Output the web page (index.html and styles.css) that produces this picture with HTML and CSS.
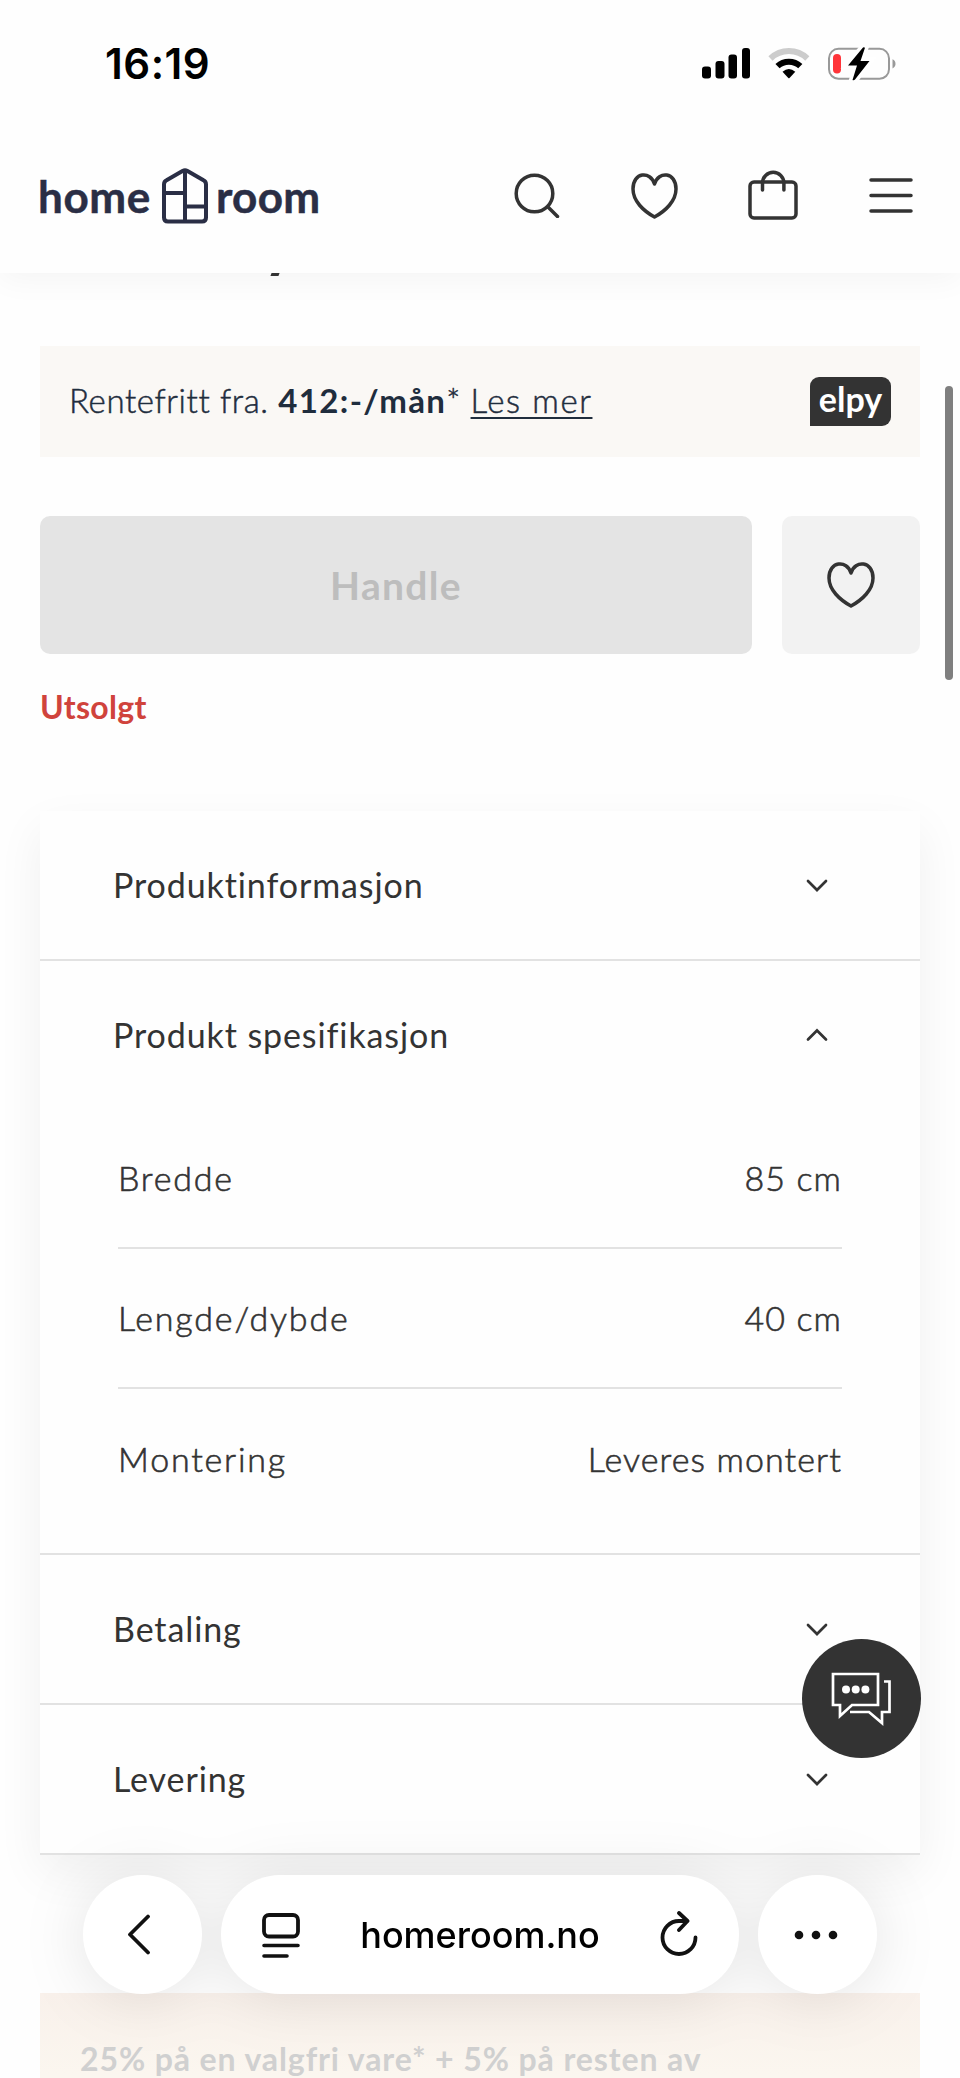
FILE: index.html
```
<!DOCTYPE html>
<html lang="no">
<head>
    <meta charset="UTF-8">
    <meta name="viewport" content="width=device-width, initial-scale=1.0">
    <title>Homeroom</title>
    <link rel="stylesheet" href="styles.css">
</head>
<body>
<div class="screen">

    <header class="top">
        <div class="status">
            <span class="clock">16:19</span>
            <svg class="status-icons" width="194" height="34" viewBox="0 0 194 34">
                <rect x="0" y="19.500" width="9" height="12" rx="3"/>
                <rect x="13.500" y="14" width="9" height="17.500" rx="3"/>
                <rect x="26.500" y="7.500" width="8.500" height="24" rx="3"/>
                <rect x="40" y="1" width="8" height="30.500" rx="3"/>
                <g fill="none" stroke="#000" stroke-width="6">
                    <path d="M68.500 11.500a26.500 26.500 0 0 1 36.800 0" stroke="#ccc"/>
                    <path d="M75.500 19.200a16.500 16.500 0 0 1 22.800 0"/>
                </g>
                <path d="M80.500 24.800q6.400-5.600 12.800 0L87.500 31q-.6.500-1.200 0z"/>
                <rect x="127" y="1.800" width="60" height="30" rx="9.500" fill="none" stroke="#999" stroke-width="2"/>
                <path d="M190.500 12.200q3 1.200 3 4.600t-3 4.600z" fill="#999"/>
                <rect x="131" y="7" width="8" height="19.500" rx="4" fill="#ff3439"/>
                <path d="M161 0.500L146 18.500h9l-4.500 14.500q1.500.6 2.500-.5L167.500 14h-9L163 .8q-1-.8-2-.3z" stroke="#fff" stroke-width="7"/>
                <path d="M161 0.500L146 18.500h9l-4.500 14.500q1.500.6 2.500-.5L167.500 14h-9L163 .8q-1-.8-2-.3z"/>
            </svg>
        </div>
        <div class="nav">
            <div class="logo">
                <span class="word home">home</span>
                <svg width="46" height="56" viewBox="0 0 46 56" fill="none" stroke="#2a2e45" stroke-width="4" stroke-linejoin="round">
                    <path d="M2 16.500q0-3 2.500-4.200L20.500 3q2.500-1.300 5 0l16 9.300q2.500 1.200 2.500 4.200v33q0 4-4 4H6q-4 0-4-4z"/>
                    <path d="M23 3v50M2 25h21M23 38.500h21"/>
                </svg>
                <span class="word room">room</span>
            </div>
            <div class="nav-icons">
                <svg width="46" height="46" viewBox="0 0 46 46">
                    <circle cx="20.500" cy="21.500" r="18.300"/>
                    <path d="M34 35l9.500 9.500"/>
                </svg>
                <svg width="48" height="48" viewBox="0 0 48 48">
                    <path d="M24.500 13C20.500-.5 3 1 3 18c0 12 10.500 22 21.500 28C35.500 40 46 30 46 18 46 1 28.500-.5 24.500 13z"/>
                </svg>
                <svg width="50" height="50" viewBox="0 0 50 50">
                    <rect x="2" y="12" width="46" height="36" rx="4"/>
                    <path d="M14.500 20v-7a10.700 10.700 0 0 1 21.400 0v7"/>
                </svg>
                <svg width="46" height="46" viewBox="0 0 46 46">
                    <path d="M3 8h40M3 23.500h40M3 39h40"/>
                </svg>
            </div>
        </div>
    </header>

    <main class="content">
        <div class="price-edge"></div>

        <div class="notice">
            <p>Rentefritt fra. <b>412:-/mån</b>* <a href="#">Les mer</a></p>
            <span class="elpy">elpy</span>
        </div>

        <div class="buy">
            <button class="handle" disabled>Handle</button>
            <button class="fav">
                <svg width="48" height="48" viewBox="0 0 48 48">
                    <path d="M24 13C20-.5 2 1 2 18c0 12 11 22 22 28 11-6 22-16 22-28C46 1 28-.5 24 13z"/>
                </svg>
            </button>
        </div>
        <p class="stock">Utsolgt</p>

        <div class="accordion">
            <section class="item">
                <h3>Produktinformasjon <svg width="22" height="14" viewBox="0 0 22 14"><path d="M2 3l9 9 9-9"/></svg></h3>
            </section>
            <section class="item">
                <h3>Produkt spesifikasjon <svg width="22" height="14" viewBox="0 0 22 14"><path d="M2 11.500l9-9 9 9"/></svg></h3>
                <dl class="specs">
                    <div><dt>Bredde</dt><dd>85 cm</dd></div>
                    <div><dt>Lengde/dybde</dt><dd>40 cm</dd></div>
                    <div><dt>Montering</dt><dd>Leveres montert</dd></div>
                </dl>
            </section>
            <section class="item">
                <h3>Betaling <svg width="22" height="14" viewBox="0 0 22 14"><path d="M2 3l9 9 9-9"/></svg></h3>
            </section>
            <section class="item">
                <h3>Levering <svg width="22" height="14" viewBox="0 0 22 14"><path d="M2 3l9 9 9-9"/></svg></h3>
            </section>
        </div>

        <div class="promo"><p>25% på en valgfri vare* + 5% på resten av</p></div>
    </main>

    <div class="scrollbar"></div>

    <button class="chat">
        <svg width="60" height="54" viewBox="0 0 60 54">
            <path d="M2 2h45v31H21L9 44V33H2z"/>
            <path d="M53 9.500h5.500V40H51v11L38 40H19"/>
            <g class="dots"><circle cx="15" cy="17.500" r="4"/><circle cx="24.700" cy="17.500" r="4"/><circle cx="34.400" cy="17.500" r="4"/></g>
        </svg>
    </button>

    <!-- browser toolbar -->
    <div class="toolbar">
        <div class="round">
            <svg class="back" width="24" height="42" viewBox="0 0 24 42"><path d="M21 2.500L3 20.500l18 18"/></svg>
        </div>
        <div class="address">
            <svg width="40" height="48" viewBox="0 0 40 48">
                <rect x="3" y="4" width="34" height="21.500" rx="5"/>
                <path d="M3 34.500h34M3 45h23" stroke-width="3.600"/>
            </svg>
            <span>homeroom.no</span>
            <svg width="40" height="48" viewBox="0 0 40 48">
                <path d="M28.500 10H20A16.500 16.500 0 1 0 36.500 26.500M20 2l8.500 8-8.500 9"/>
            </svg>
        </div>
        <div class="round">
            <svg class="more" width="44" height="10" viewBox="0 0 44 10"><circle cx="5" cy="5" r="4.300"/><circle cx="22" cy="5" r="4.300"/><circle cx="39" cy="5" r="4.300"/></svg>
        </div>
    </div>

</div>
</body>
</html>
```
FILE: styles.css
```
* {
    box-sizing: border-box;
}
body {
    margin: 0;
    background: #fefefe;
    color: #333;
    font-family: Lato, "Liberation Sans", sans-serif;
}
p, h3, dl, dd {
    margin: 0;
}
button {
    border: 0;
    padding: 0;
    font-family: inherit;
}
svg {
    flex: none;
}
.screen {
    position: relative;
    width: 960px;
    height: 2078px;
    overflow: hidden;
}

/* header */
.top {
    position: relative;
    height: 273px;
    background: #fefefe;
    box-shadow: 0 6px 30px rgba(0, 0, 0, 0.045);
}
.status {
    display: flex;
    justify-content: space-between;
    align-items: center;
    height: 127px;
    padding: 0 64px 0 105px;
}
.clock {
    font: 600 42px Inter, sans-serif;
    letter-spacing: 0.5px;
    color: #000;
}
.nav {
    display: flex;
    justify-content: space-between;
    align-items: center;
    height: 137px;
    padding: 0 46px 0 38px;
}
.logo {
    display: flex;
    align-items: center;
    color: #2a2e45;
}
.word {
    font-size: 44px;
    font-weight: 700;
    letter-spacing: 0.6px;
    line-height: 52px;
    -webkit-text-stroke: 0.5px;
}
/* short stem on the h */
.home {
    width: 124px;
    clip-path: inset(9px 0 0 0);
}
.room {
    margin-left: 8px;
    letter-spacing: 0.3px;
}
.nav-icons {
    display: flex;
    align-items: center;
    gap: 70px;
    padding-bottom: 2px;
}
.nav-icons svg, .fav svg {
    fill: none;
    stroke: #333;
    stroke-width: 3.5;
    stroke-linecap: round;
    stroke-linejoin: round;
}

/* product */
.content {
    padding: 0 40px;
}
.price-edge {
    width: 8px;
    height: 3px;
    margin-left: 231px;
    background: #333;
    transform: skewX(-20deg);
}
.notice {
    display: flex;
    justify-content: space-between;
    align-items: center;
    height: 111px;
    margin-top: 70px;
    padding: 0 29px;
    background: #faf8f5;
    color: #1f2d3d;
    font-size: 33px;
    font-weight: 300;
}
.notice p {
    padding-bottom: 4px;
    letter-spacing: 0.6px;
    -webkit-text-stroke: 0.5px;
}
.notice b {
    font-weight: 700;
    letter-spacing: 1.4px;
    -webkit-text-stroke: 0;
}
.notice a {
    color: inherit;
    letter-spacing: 1.6px;
    text-decoration-thickness: 2px;
    text-underline-offset: 4px;
}
.elpy {
    width: 81px;
    height: 49px;
    border-radius: 9px 9px 9px 0;
    background: #333;
    color: #fff;
    font-size: 34px;
    font-weight: 700;
    line-height: 43px;
    text-align: center;
}
.buy {
    display: flex;
    gap: 30px;
    height: 138px;
    margin-top: 59px;
}
.handle {
    flex: 1;
    border-radius: 10px;
    background: #e4e4e4;
    color: #bdbdbd;
    font-size: 39px;
    font-weight: 700;
    letter-spacing: 1.3px;
}
.fav {
    width: 138px;
    border-radius: 10px;
    background: #f2f2f2;
}
.stock {
    margin-top: 33px;
    height: 124px;
    color: #d0433c;
    font-size: 32px;
    font-weight: 700;
    letter-spacing: 0.3px;
    line-height: 40px;
}

/* accordion */
.accordion {
    background: #fefefe;
    box-shadow: 0 18px 45px rgba(0, 0, 0, 0.06);
}
.item {
    border-bottom: 2px solid #e2e2e2;
}
.item h3 {
    display: flex;
    justify-content: space-between;
    align-items: center;
    height: 148px;
    padding: 0 92px 1px 73px;
    font-size: 34px;
    font-weight: 400;
    letter-spacing: 0.9px;
}
.item h3 svg {
    fill: none;
    stroke: #333;
    stroke-width: 2.7;
    stroke-linecap: round;
}
.specs {
    padding: 0 78px 24px;
    font-size: 34px;
    font-weight: 300;
    -webkit-text-stroke: 0.6px;
}
.specs div {
    display: flex;
    justify-content: space-between;
    align-items: center;
    height: 140px;
    padding-bottom: 2px;
    border-bottom: 2px solid #e2e2e2;
}
.specs div:last-child {
    border: 0;
}
.specs dt {
    letter-spacing: 1.8px;
}
.specs dd {
    letter-spacing: 1.1px;
}
.promo {
    height: 100px;
    margin-top: 138px;
    padding: 46px 40px 0;
    background: linear-gradient(#f9f1eb, #fbf6ef 80px);
    color: #d0d0d0;
    font-size: 32px;
    font-weight: 700;
    letter-spacing: 0.9px;
    line-height: 40px;
    white-space: nowrap;
}

/* things on top of the page */
.scrollbar {
    position: absolute;
    top: 386px;
    right: 7px;
    width: 8px;
    height: 294px;
    border-radius: 4px;
    background: #7f7f7f;
}
.chat {
    position: absolute;
    top: 1639px;
    right: 39px;
    width: 119px;
    height: 119px;
    padding: 4px 2px 0 0;
    border-radius: 50%;
    background: #333;
}
.chat svg {
    fill: none;
    stroke: #fff;
    stroke-width: 2.7;
}
.chat .dots {
    fill: #fff;
    stroke: none;
}
/* one soft shadow for the three buttons together */
.toolbar {
    position: absolute;
    left: 83px;
    right: 83px;
    bottom: 84px;
    display: flex;
    gap: 19px;
    height: 119px;
    filter: drop-shadow(0 4px 30px rgba(0, 0, 0, 0.1));
}
.round, .address {
    display: flex;
    align-items: center;
    border-radius: 60px;
    background: #fff;
}
.round {
    width: 119px;
    justify-content: center;
}
.address {
    flex: 1;
    justify-content: space-between;
    padding: 0 40px;
    color: #000;
    font: 500 36px Inter, sans-serif;
}
.toolbar svg {
    fill: none;
    stroke: #111;
    stroke-width: 3.8;
    stroke-linecap: round;
    stroke-linejoin: round;
}
.toolbar .back {
    margin-right: 7px;
}
.toolbar .more {
    margin-right: 3px;
    fill: #111;
    stroke: none;
}
```
